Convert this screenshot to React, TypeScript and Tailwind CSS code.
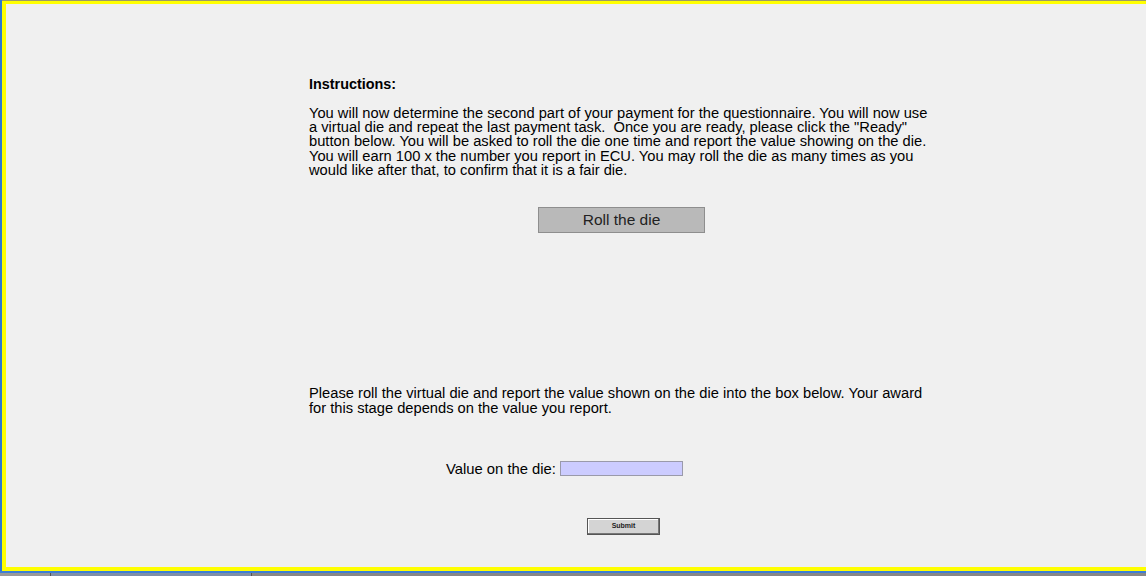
export default function App() {
  const font = { fontFamily: '"Liberation Sans", Arial, sans-serif' };
  return (
    <div className="w-[1146px] h-[576px] flex flex-col bg-[#f0f0f0] overflow-hidden" style={font}>
      <div className="flex flex-1 min-h-0">
        <div className="w-[2px] bg-[#2b78d4]" />
        <div className="flex-1 flex flex-col">
          <div className="h-[1px] bg-[#9a9a6a]" />
          <div className="flex-1 border-t-[3px] border-l-[4px] border-b-[4px] border-[#ffff00] bg-[#f0f0f0]">
            <div className="pl-[303px] pt-[73px] text-[14.7px] leading-[14.3px] text-black">
              <div className="font-bold text-[14.4px]">Instructions:</div>
              <div className="mt-[14.5px]">
                <div>You will now determine the second part of your payment for the questionnaire. You will now use</div>
                <div>a virtual die and repeat the last payment task.&nbsp; Once you are ready, please click the "Ready"</div>
                <div>button below. You will be asked to roll the die one time and report the value showing on the die.</div>
                <div>You will earn 100 x the number you report in ECU. You may roll the die as many times as you</div>
                <div>would like after that, to confirm that it is a fair die.</div>
              </div>
              <div className="mt-[30px] ml-[229px] w-[167px] h-[26px] bg-[#b9b9b9] border border-[#8e8e8e] flex items-center justify-center text-[15.5px] text-[#222]">
                Roll the die
              </div>
              <div className="mt-[153px]">
                <div>Please roll the virtual die and report the value shown on the die into the box below. Your award</div>
                <div>for this stage depends on the value you report.</div>
              </div>
              <div className="mt-[46px] ml-[137px] flex items-center h-[16px]">
                <span className="text-[14.8px]">Value on the die:</span>
                <div className="ml-[4px] w-[123px] h-[15px] bg-[#ccccff] border border-[#9a9aaa]" />
              </div>
              <div className="mt-[41px] ml-[278px] w-[73px] h-[17px] bg-[#d4d4d4] border border-[#555] shadow-[inset_-1px_-1px_0_#777,inset_1px_1px_0_#fff] flex items-center justify-center text-[7px] font-bold text-[#222]">
                Submit
              </div>
            </div>
          </div>
        </div>
      </div>
      <div className="h-[2px] bg-[#3c7fd6]" />
      <div className="h-[3px] bg-[#8c8c8c] flex">
        <div className="w-[50px] bg-[#9a9a9a]" />
        <div className="w-[1px] bg-[#555]" />
        <div className="w-[200px] bg-[#7f8fa8]" />
        <div className="w-[1px] bg-[#555]" />
        <div className="flex-1 bg-[#888]" />
      </div>
    </div>
  );
}
